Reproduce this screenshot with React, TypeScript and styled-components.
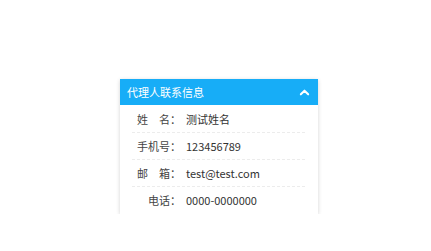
import React, { useState } from 'react';
import styled, { createGlobalStyle } from 'styled-components';

const GlobalStyle = createGlobalStyle`
  html, body {
    margin: 0;
    padding: 0;
    background: #fff;
  }
  body {
    font-family: "Noto Sans CJK SC", "Noto Sans", sans-serif;
  }
`;

const Page = styled.div`
  padding: 79px 0 0 120px;
`;

const Card = styled.div`
  width: 198px;
  background: #fff;
  box-shadow: 0 1px 4px rgba(0, 0, 0, 0.18);
`;

const Header = styled.div`
  height: 26px;
  background: #17adf7;
  color: #fff;
  display: flex;
  align-items: center;
  justify-content: space-between;
  padding: 0 8px 0 7px;
  font-size: 11px;
  cursor: pointer;
`;

const Toggle = styled.svg<{ $open: boolean }>`
  width: 11px;
  height: 11px;
  transform: rotate(${p => (p.$open ? 0 : 180)}deg);
`;

const List = styled.div`
  padding: 0 13px 1px 12px;
`;

const Row = styled.div`
  height: 27px;
  display: flex;
  align-items: center;
  font-size: 11px;
  color: #333;
  & + & {
    border-top: 1px dashed #ececec;
    height: 26px;
  }
`;

const Label = styled.span`
  width: 49px;
  text-align: right;
  white-space: pre;
  color: #444;
`;

const Value = styled.span`
  margin-left: 5px;
`;

const items = [
  { label: '姓　名：', value: '测试姓名' },
  { label: '手机号：', value: '123456789' },
  { label: '邮　箱：', value: 'test@test.com' },
  { label: '电话：', value: '0000-0000000' },
];

export default function App() {
  const [open, setOpen] = useState(true);
  return (
    <Page>
      <GlobalStyle />
      <Card>
        <Header onClick={() => setOpen(!open)}>
          <span>代理人联系信息</span>
          <Toggle $open={open} viewBox="0 0 12 12">
            <path d="M2 8 L6 4 L10 8" fill="none" stroke="#fff" strokeWidth="2.2" strokeLinecap="round" strokeLinejoin="round" />
          </Toggle>
        </Header>
        {open && (
          <List>
            {items.map(it => (
              <Row key={it.label}>
                <Label>{it.label}</Label>
                <Value>{it.value}</Value>
              </Row>
            ))}
          </List>
        )}
      </Card>
    </Page>
  );
}
